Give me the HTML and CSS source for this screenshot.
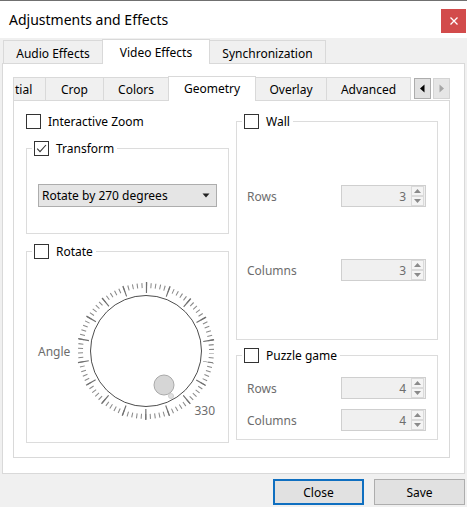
FILE: index.html
```html
<!DOCTYPE html>
<html>
<head>
<meta charset="utf-8">
<title>Adjustments and Effects</title>
<link rel="stylesheet" href="styles.css">
</head>
<body>
<div class="window">
  <header class="titlebar">
    <span class="title">Adjustments and Effects</span>
    <span class="close-x"><svg width="10" height="10" viewBox="0 0 10 10"><path d="M1.5 1.5 L8.5 8.5 M8.5 1.5 L1.5 8.5" stroke="#fff" stroke-width="1.3" fill="none"/></svg></span>
  </header>
  <main class="client">
    <div class="tabbar outer">
      <div class="tab t-audio">Audio Effects</div>
      <div class="tab active t-video">Video Effects</div>
      <div class="tab t-sync">Synchronization</div>
    </div>
    <section class="pane outer-pane">
      <div class="tabbar inner">
        <div class="tab t-spatial">tial</div>
        <div class="tab t-crop">Crop</div>
        <div class="tab t-colors">Colors</div>
        <div class="tab active t-geometry">Geometry</div>
        <div class="tab t-overlay">Overlay</div>
        <div class="tab t-advanced">Advanced</div>
        <div class="scrollers">
          <span class="scroll-btn"><svg width="7" height="9" viewBox="0 0 7 9"><path d="M5.5 0.5 L1 4.5 L5.5 8.5 Z" fill="#000"/></svg></span>
          <span class="scroll-btn disabled"><svg width="7" height="9" viewBox="0 0 7 9"><path d="M1.5 0.5 L6 4.5 L1.5 8.5 Z" fill="#a6a6a6"/></svg></span>
        </div>
      </div>
      <div class="pane inner-pane">
        <div class="col">
          <label class="check standalone"><span class="box"></span><span>Interactive Zoom</span></label>
          <fieldset class="group g-transform">
            <legend class="check"><span class="box"><svg width="13" height="13" viewBox="0 0 13 13"><path d="M2.2 6.6 L5 9.6 L11 3" stroke="#333" stroke-width="1.1" fill="none"/></svg></span><span>Transform</span></legend>
            <div class="combo"><span>Rotate by 270 degrees</span><svg width="8" height="5" viewBox="0 0 8 5"><path d="M0.5 0.5 L7.5 0.5 L4 4.5 Z" fill="#222"/></svg></div>
          </fieldset>
          <fieldset class="group g-rotate">
            <legend class="check"><span class="box"></span><span>Rotate</span></legend>
            <div class="dial-row">
              <span class="dim dial-label">Angle</span>
              <svg class="dial" width="144" height="144" viewBox="0 0 144 144">
                <circle cx="72" cy="72" r="65.5" fill="none" stroke="#8a8a8a" stroke-width="5" stroke-dasharray="1.05 3.5228" stroke-dashoffset="0.525" transform="rotate(2 72 72)"/>
                <circle cx="72" cy="72" r="63.5" fill="none" stroke="#707070" stroke-width="11" stroke-dasharray="1.2 20.966" stroke-dashoffset="0.6" transform="rotate(10 72 72)"/>
                <circle cx="72" cy="72" r="55.5" fill="#fff" stroke="#4d4d4d" stroke-width="1"/>
                <circle cx="97" cy="117" r="2.5" fill="#e2e2e2" stroke="#cfcfcf" stroke-width="1"/>
                <circle cx="90" cy="106" r="10" fill="#d6d6d6" stroke="#a9a9a9" stroke-width="1"/>
                <text class="dial-value" x="141" y="136" text-anchor="end">330</text>
              </svg>
            </div>
          </fieldset>
        </div>
        <div class="col">
          <fieldset class="group g-wall">
            <legend class="check"><span class="box"></span><span>Wall</span></legend>
            <div class="form-row first"><span class="dim">Rows</span><div class="spin"><span class="val">3</span><span class="arrows"><svg width="13" height="20" viewBox="0 0 13 20"><rect x="0.5" y="0.5" width="12" height="9" fill="#f4f4f4" stroke="#dadada"/><rect x="0.5" y="10.5" width="12" height="9" fill="#f4f4f4" stroke="#dadada"/><path d="M3 7 L10 7 L6.5 3 Z" fill="#8a8a8a"/><path d="M3 13 L10 13 L6.5 17 Z" fill="#8a8a8a"/></svg></span></div></div>
            <div class="form-row second"><span class="dim">Columns</span><div class="spin"><span class="val">3</span><span class="arrows"><svg width="13" height="20" viewBox="0 0 13 20"><rect x="0.5" y="0.5" width="12" height="9" fill="#f4f4f4" stroke="#dadada"/><rect x="0.5" y="10.5" width="12" height="9" fill="#f4f4f4" stroke="#dadada"/><path d="M3 7 L10 7 L6.5 3 Z" fill="#8a8a8a"/><path d="M3 13 L10 13 L6.5 17 Z" fill="#8a8a8a"/></svg></span></div></div>
          </fieldset>
          <fieldset class="group g-puzzle">
            <legend class="check"><span class="box"></span><span>Puzzle game</span></legend>
            <div class="form-row p-first"><span class="dim">Rows</span><div class="spin"><span class="val">4</span><span class="arrows"><svg width="13" height="20" viewBox="0 0 13 20"><rect x="0.5" y="0.5" width="12" height="9" fill="#f4f4f4" stroke="#dadada"/><rect x="0.5" y="10.5" width="12" height="9" fill="#f4f4f4" stroke="#dadada"/><path d="M3 7 L10 7 L6.5 3 Z" fill="#8a8a8a"/><path d="M3 13 L10 13 L6.5 17 Z" fill="#8a8a8a"/></svg></span></div></div>
            <div class="form-row p-second"><span class="dim">Columns</span><div class="spin"><span class="val">4</span><span class="arrows"><svg width="13" height="20" viewBox="0 0 13 20"><rect x="0.5" y="0.5" width="12" height="9" fill="#f4f4f4" stroke="#dadada"/><rect x="0.5" y="10.5" width="12" height="9" fill="#f4f4f4" stroke="#dadada"/><path d="M3 7 L10 7 L6.5 3 Z" fill="#8a8a8a"/><path d="M3 13 L10 13 L6.5 17 Z" fill="#8a8a8a"/></svg></span></div></div>
          </fieldset>
        </div>
      </div>
    </section>
    <div class="buttons">
      <button class="btn default">Close</button>
      <button class="btn">Save</button>
    </div>
  </main>
</div>
</body>
</html>
```

FILE: styles.css
```css
* { box-sizing: border-box; }
html, body { margin: 0; padding: 0; }
body {
  width: 467px;
  height: 507px;
  overflow: hidden;
  background: #f0f0f0;
  font-family: "Noto Sans", "Open Sans", sans-serif;
  font-size: 12px;
  line-height: 16px;
  color: #000;
}
.window { width: 467px; height: 507px; display: flex; flex-direction: column; }

/* title bar */
.titlebar {
  height: 38px;
  flex: none;
  background: #fff;
  border-top: 1px solid #707070;
  display: flex;
  align-items: flex-start;
  padding-left: 9px;
}
.title { font-size: 14px; line-height: 20px; margin-top: 9px; color: #000; }
.close-x {
  margin-left: auto;
  margin-top: 8px;
  margin-right: 1px;
  width: 25px;
  height: 24px;
  background: #d24b4b;
  display: flex;
  align-items: center;
  justify-content: center;
}

/* client area */
.client { flex: 1; display: flex; flex-direction: column; padding: 1px 2px 0 2px; }

.tabbar { display: flex; align-items: flex-end; height: 24px; flex: none; }
.tabbar.outer { padding-left: 1px; }
.tab {
  height: 23px;
  border: 1px solid #d9d9d9;
  border-bottom: none;
  background: #f0f0f0;
  margin-left: -1px;
  text-align: center;
  line-height: 21px;
  white-space: nowrap;
  overflow: hidden;
}
.tab:first-child { margin-left: 0; }
.tab.active {
  height: 25px;
  margin-bottom: -1px;
  background: #fff;
  position: relative;
  z-index: 1;
  line-height: 22px;
}
.outer .tab { padding-top: 2px; }
.outer .tab.active { padding-top: 2px; }
.inner .tab { padding-top: 1px; }
.t-audio { width: 100px; }
.t-video { width: 108px; }
.t-sync { width: 117px; }

.pane { background: #fff; border: 1px solid #d9d9d9; }
.outer-pane { width: 463px; height: 411px; padding: 12px 14px 0 10px; flex: none; }

.tabbar.inner { width: 437px; }
.t-spatial { width: 33px; text-align: left; padding-left: 1px; }
.t-crop { width: 59px; }
.t-colors { width: 66px; }
.t-geometry { width: 88px; }
.t-overlay { width: 72px; }
.t-advanced { width: 85px; }
.scrollers { margin-left: auto; display: flex; gap: 2px; align-self: flex-start; margin-top: 2px; }
.scroll-btn {
  width: 17px;
  height: 21px;
  background: #e1e1e1;
  border: 1px solid #adadad;
  display: flex;
  align-items: center;
  justify-content: center;
}
.scroll-btn.disabled { background: #e6e6e6; border-color: #d4d4d4; }

.inner-pane {
  width: 437px;
  height: 358px;
  padding: 12px 11px 0 12px;
  display: grid;
  grid-template-columns: 203px 202px;
  column-gap: 7px;
  align-items: start;
}
.col { display: flex; flex-direction: column; }

/* checkbox */
.check { display: flex; align-items: center; white-space: nowrap; }
.check > span:last-child { padding-top: 1px; }
.box {
  width: 15px;
  height: 15px;
  border: 1px solid #333;
  background: #fff;
  display: flex;
  align-items: center;
  justify-content: center;
  flex: none;
  margin-right: 7px;
}
.standalone { height: 17px; }

/* group boxes */
.group {
  margin: 0;
  padding: 0 5px;
  border: 1px solid #dcdcdc;
  min-width: 0;
}
.group legend { padding: 0 3px 0 2px; height: 16px; }
.g-transform { margin-top: 10px; height: 94px; }
.g-rotate { margin-top: 9px; height: 200px; }
.g-wall { height: 227px; }
.g-puzzle { margin-top: 7px; height: 93px; }

.combo {
  margin: 28px 6px 0 6px;
  height: 23px;
  background: #e5e5e5;
  border: 1px solid #adadad;
  display: flex;
  align-items: center;
  justify-content: space-between;
  padding: 0 6px 0 3px;
}

.dim { color: #6d6d6d; }
.dial-row { display: flex; align-items: center; margin-top: 20px; }
.dial-label { width: 42px; padding-left: 6px; padding-top: 2px; }
.dial { display: block; flex: none; }
.dial-value { font-family: "Noto Sans", "Open Sans", sans-serif; font-size: 12px; fill: #6d6d6d; }

.form-row {
  display: flex;
  align-items: center;
  justify-content: space-between;
  padding: 0 6px 0 5px;
}
.form-row > .dim { padding-top: 2px; }
.first { margin-top: 56px; }
.second { margin-top: 52px; }
.p-first { margin-top: 14px; }
.p-second { margin-top: 10px; }
.spin {
  width: 85px;
  height: 22px;
  background: #f0f0f0;
  border: 1px solid #cfcfcf;
  display: flex;
  align-items: center;
  justify-content: flex-end;
  padding-right: 1px;
}
.val { color: #6d6d6d; margin-right: 5px; padding-top: 1px; }
.arrows { display: flex; }
.arrows svg { display: block; }

/* buttons */
.buttons { display: flex; justify-content: flex-end; gap: 10px; padding-right: 0; margin-top: 5px; }
.btn {
  width: 91px;
  height: 26px;
  margin: 0;
  font-family: "Noto Sans", "Open Sans", sans-serif;
  font-size: 12px;
  color: #000;
  background: #e1e1e1;
  border: 1px solid #adadad;
  padding: 0;
}
.btn.default { border: 2px solid #0f6fc0; }
```
